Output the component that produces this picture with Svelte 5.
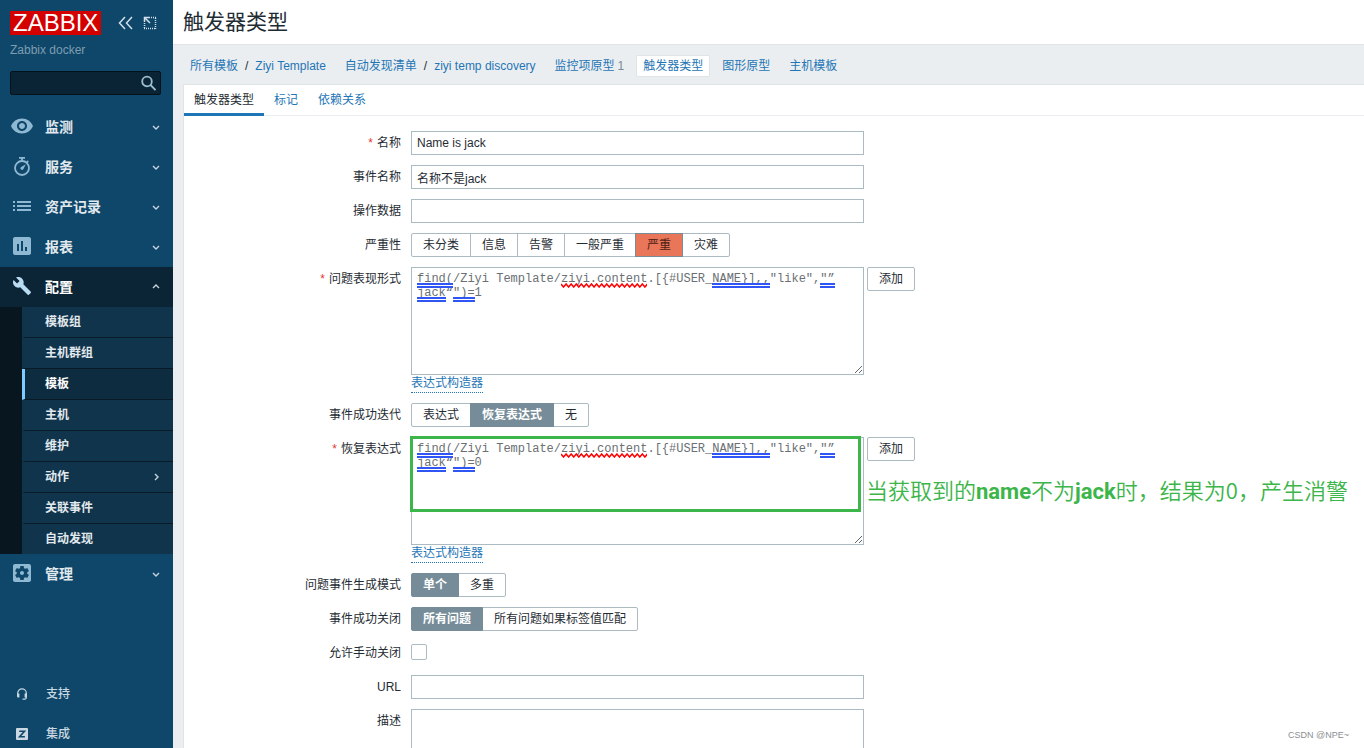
<script>
    const menu = [
        { label: "监测", icon: "eye" },
        { label: "服务", icon: "timer" },
        { label: "资产记录", icon: "list" },
        { label: "报表", icon: "chart" },
        {
            label: "配置",
            icon: "wrench",
            open: true,
            items: [
                { label: "模板组" },
                { label: "主机群组" },
                { label: "模板", selected: true },
                { label: "主机" },
                { label: "维护" },
                { label: "动作", more: true },
                { label: "关联事件" },
                { label: "自动发现" },
            ],
        },
        { label: "管理", icon: "gear" },
    ];

    const tabs = ["触发器类型", "标记", "依赖关系"];
    const severities = ["未分类", "信息", "告警", "一般严重", "严重", "灾难"];

    // row / start / length are counted in characters of the monospace text
    const marks = [
        { row: 0, start: 0, length: 5, type: "grammar" },
        { row: 0, start: 20, length: 12, type: "spelling" },
        { row: 0, start: 41, length: 8, type: "grammar" },
        { row: 0, start: 56, length: 2, type: "grammar" },
        { row: 1, start: 0, length: 4, type: "grammar" },
        { row: 1, start: 5, length: 3, type: "grammar" },
    ];

    const body = 'find(/Ziyi Template/ziyi.content.[{#USER_NAME}],,"like","”\njack“")=';

    let name = $state("Name is jack");
    let eventName = $state("名称不是jack");
    let opdata = $state("");
    let url = $state("");
    let severity = $state("严重");
    let recoveryMode = $state("恢复表达式");
    let eventMode = $state("单个");
    let closeMode = $state("所有问题");
    let problem = $state(body + "1");
    let recovery = $state(body + "0");
</script>

{#snippet icon(kind)}
    <svg class="icon" viewBox="0 0 24 24" aria-hidden="true">
        {#if kind === "eye"}
            <path d="M12 4.5C7 4.5 2.73 7.61 1 12c1.73 4.39 6 7.5 11 7.5s9.27-3.11 11-7.5c-1.73-4.39-6-7.5-11-7.5zM12 17c-2.76 0-5-2.24-5-5s2.24-5 5-5 5 2.24 5 5-2.24 5-5 5zm0-8c-1.66 0-3 1.34-3 3s1.34 3 3 3 3-1.34 3-3-1.34-3-3-3z" />
        {:else if kind === "timer"}
            <g fill="none" stroke="currentColor" stroke-width="1.8">
                <circle cx="12" cy="14" r="7" />
                <path d="M9 3.9h6M12 4v3M16.6 8.6l1.6-1.6" />
            </g>
            <path d="M15.8 10.2l-2.5 5a1.6 1.6 0 0 1-2.5-2z" />
        {:else if kind === "list"}
            <path d="M3 7h2v2H3zM7 7h14v2H7zM3 11h2v2H3zM7 11h14v2H7zM3 15h2v2H3zM7 15h14v2H7z" />
        {:else if kind === "chart"}
            <path d="M19 3H5c-1.1 0-2 .9-2 2v14c0 1.1.9 2 2 2h14c1.1 0 2-.9 2-2V5c0-1.1-.9-2-2-2zM9 17H7v-7h2v7zm4 0h-2V7h2v10zm4 0h-2v-4h2v4z" />
        {:else if kind === "wrench"}
            <path transform="translate(2.2 2.2) scale(.82)" d="M22.7 19l-9.1-9.1c.9-2.3.4-5-1.5-6.9-2-2-5-2.4-7.4-1.3L9 6 6 9 1.6 4.7C.4 7.1.9 10.1 2.9 12.1c1.9 1.9 4.6 2.4 6.9 1.5l9.1 9.1c.4.4 1 .4 1.4 0l2.3-2.3c.5-.4.5-1.1.1-1.4z" />
        {:else}
            <path d="M12 10c-1.1 0-2 .9-2 2s.9 2 2 2 2-.9 2-2-.9-2-2-2zm7-7H5c-1.11 0-2 .9-2 2v14c0 1.1.89 2 2 2h14c1.11 0 2-.9 2-2V5c0-1.1-.89-2-2-2zm-1.75 9c0 .23-.02.46-.05.68l1.48 1.16c.13.11.17.3.08.45l-1.4 2.42c-.09.15-.27.21-.43.15l-1.74-.7c-.36.28-.76.51-1.18.69l-.26 1.85c-.03.17-.18.3-.35.3h-2.8c-.17 0-.32-.13-.35-.29l-.26-1.85c-.43-.18-.82-.41-1.18-.69l-1.74.7c-.16.06-.34 0-.43-.15l-1.4-2.42c-.09-.15-.05-.34.08-.45l1.48-1.16c-.03-.23-.05-.46-.05-.69 0-.23.02-.46.05-.68l-1.48-1.16c-.13-.11-.17-.3-.08-.45l1.4-2.42c.09-.15.27-.21.43-.15l1.74.7c.36-.28.76-.51 1.18-.69l.26-1.85c.03-.17.18-.3.35-.3h2.8c.17 0 .32.13.35.29l.26 1.85c.43.18.82.41 1.18.69l1.74-.7c.16-.06.34 0 .43.15l1.4 2.42c.09.15.05.34-.08.45l-1.48 1.16c.03.23.05.46.05.69z" />
        {/if}
    </svg>
{/snippet}

{#snippet chevron(dir)}
    <svg class="chevron {dir}" viewBox="0 0 8 8" aria-hidden="true">
        <path d="M1 3l3 3 3-3" />
    </svg>
{/snippet}

{#snippet underlines()}
    <div class="marks" aria-hidden="true">
        {#each marks as m}
            <span
                class="mark {m.type}"
                style="left: {m.start}ch; width: {m.length}ch; top: {m.row * 14}px"
            >
                {#if m.type === "spelling"}
                    <svg viewBox="0 0 86 5" preserveAspectRatio="none">
                        <polyline
                            points={Array.from({ length: 35 }, (_, i) => `${i * 2.53},${i % 2 ? 4 : 1}`).join(" ")}
                        />
                    </svg>
                {/if}
            </span>
        {/each}
    </div>
{/snippet}

<div class="app" lang="zh-CN">
    <aside class="sidebar">
        <div class="brand">
            <a class="logo" href="#home">ZABBIX</a>
            <button class="icon-btn" type="button" aria-label="收起侧边栏">
                <svg viewBox="0 0 16 14"><path d="M8 1L2.500 7l5.500 6M15 1L9.500 7l5.500 6" /></svg>
            </button>
            <button class="icon-btn" type="button" aria-label="隐藏侧边栏">
                <svg viewBox="0 0 16 14">
                    <path stroke-dasharray="1 1" d="M8 1.500h7M14.500 2v11M3.500 7v6M3 12.500h12" />
                    <path d="M3.500 6V1.500H8M4 2l5 5" />
                </svg>
            </button>
        </div>
        <div class="server">Zabbix docker</div>
        <form class="search" role="search">
            <input type="text" aria-label="搜索" />
            <button type="button" aria-label="搜索">
                <svg viewBox="0 0 16 16"><circle cx="7" cy="6.500" r="4.800" /><path d="M10.500 10l5 5" /></svg>
            </button>
        </form>

        <nav class="menu">
            {#each menu as entry}
                <a class="menu-item" class:open={entry.open} href="#menu">
                    {@render icon(entry.icon)}
                    <span>{entry.label}</span>
                    {@render chevron(entry.open ? "up" : "down")}
                </a>
                {#if entry.items}
                    <div class="submenu">
                        {#each entry.items as item}
                            <a class="sub-item" class:selected={item.selected} href="#sub">
                                <span>{item.label}</span>
                                {#if item.more}{@render chevron("right")}{/if}
                            </a>
                        {/each}
                    </div>
                {/if}
            {/each}
        </nav>

        <nav class="extra">
            <a href="#support">
                <svg viewBox="0 0 12 12">
                    <path class="stroke" d="M1.700 7V5.200a4.300 4.300 0 0 1 8.600 0V9.500a1.500 1.500 0 0 1-1.500 1.600H6.500" />
                    <path d="M1 5.500h2.400v4H2.200A1.200 1.200 0 0 1 1 8.300zM8.600 5.500H11v2.800a1.200 1.200 0 0 1-1.200 1.200H8.600z" />
                </svg>
                <span>支持</span>
            </a>
            <a href="#integrations">
                <svg viewBox="0 0 12 12">
                    <rect width="12" height="12" rx="1" />
                    <path class="cut" d="M3.200 3.200h5.300L3.600 8.800h5.300" />
                </svg>
                <span>集成</span>
            </a>
        </nav>
    </aside>

    <main>
        <header><h1>触发器类型</h1></header>

        <nav class="crumbs">
            <div class="crumb">
                <a href="#all">所有模板</a><span class="slash">/</span><a href="#tpl">Ziyi Template</a>
            </div>
            <div class="crumb">
                <a href="#rules">自动发现清单</a><span class="slash">/</span><a href="#rule">ziyi temp discovery</a>
            </div>
            <div class="crumb"><a href="#items">监控项原型</a><sup>1</sup></div>
            <div class="crumb current"><a href="#triggers">触发器类型</a></div>
            <div class="crumb"><a href="#graphs">图形原型</a></div>
            <div class="crumb"><a href="#hosts">主机模板</a></div>
        </nav>

        <section class="pane">
            <div class="tabs">
                {#each tabs as tab, i}
                    <a class:active={i === 0} href="#tab">{tab}</a>
                {/each}
            </div>

            <form class="fields">
                <label class="required" for="name">名称</label>
                <input id="name" class="text" type="text" bind:value={name} />

                <label for="event-name">事件名称</label>
                <input id="event-name" class="text" type="text" bind:value={eventName} />

                <label for="opdata">操作数据</label>
                <input id="opdata" class="text" type="text" bind:value={opdata} />

                <span class="caption">严重性</span>
                <div class="segments severity">
                    {#each severities as s}
                        <label><input type="radio" name="severity" value={s} bind:group={severity} /><span>{s}</span></label>
                    {/each}
                </div>

                <label class="required" for="problem">问题表现形式</label>
                <div class="expression">
                    <div class="expression-row">
                        <div class="editor">
                            <textarea id="problem" spellcheck="false" bind:value={problem}></textarea>
                            {@render underlines()}
                        </div>
                        <button class="add" type="button">添加</button>
                    </div>
                    <a class="constructor" href="#constructor">表达式构造器</a>
                </div>

                <span class="caption">事件成功迭代</span>
                <div class="segments">
                    {#each ["表达式", "恢复表达式", "无"] as m}
                        <label><input type="radio" name="recovery" value={m} bind:group={recoveryMode} /><span>{m}</span></label>
                    {/each}
                </div>

                <label class="required" for="recovery">恢复表达式</label>
                <div class="expression">
                    <div class="expression-row">
                        <div class="editor">
                            <textarea id="recovery" spellcheck="false" bind:value={recovery}></textarea>
                            {@render underlines()}
                            <div class="highlight"></div>
                            <p class="note">当获取到的<b>name</b>不为<b>jack</b>时，结果为0，产生消警</p>
                        </div>
                        <button class="add" type="button">添加</button>
                    </div>
                    <a class="constructor" href="#constructor">表达式构造器</a>
                </div>

                <span class="caption">问题事件生成模式</span>
                <div class="segments">
                    {#each ["单个", "多重"] as m}
                        <label><input type="radio" name="mode" value={m} bind:group={eventMode} /><span>{m}</span></label>
                    {/each}
                </div>

                <span class="caption">事件成功关闭</span>
                <div class="segments">
                    {#each ["所有问题", "所有问题如果标签值匹配"] as m}
                        <label><input type="radio" name="close" value={m} bind:group={closeMode} /><span>{m}</span></label>
                    {/each}
                </div>

                <label for="manual">允许手动关闭</label>
                <input id="manual" class="check" type="checkbox" />

                <label for="url">URL</label>
                <input id="url" class="text" type="text" bind:value={url} />

                <label for="description">描述</label>
                <textarea id="description"></textarea>
            </form>
        </section>
    </main>

    <div class="watermark">CSDN @NPE~</div>
</div>

<style>
    .app {
        position: relative;
        display: flex;
        height: 100vh;
        overflow: hidden;
        background: #ebeef0;
        color: #1f2c33;
        font: 12px/14px "Liberation Sans", "Noto Sans CJK SC", sans-serif;
    }
    .app * {
        box-sizing: border-box;
    }
    a {
        color: #1f76b6;
        text-decoration: none;
    }
    button,
    input,
    textarea {
        margin: 0;
        font: inherit;
        color: inherit;
    }

    /* sidebar */
    .sidebar {
        flex: none;
        width: 173px;
        background: #0f476a;
    }
    .brand {
        display: flex;
        align-items: center;
        padding: 11px 16px 0 10px;
    }
    .logo {
        margin-right: auto;
        padding: 0 3px;
        background: #d40000;
        color: #fff;
        font-size: 24px;
        line-height: 24px;
    }
    .icon-btn {
        display: flex;
        margin-left: 8px;
        padding: 0;
        border: 0;
        background: none;
    }
    .icon-btn svg {
        width: 16px;
        height: 14px;
        fill: none;
        stroke: #d3e0e9;
        stroke-width: 1.5;
    }
    .server {
        padding: 8px 10px 0;
        color: #7d9db0;
    }
    .search {
        display: flex;
        height: 24px;
        margin: 14px 12px 12px 10px;
        border: 1px solid #04121c;
        border-radius: 2px;
        background: #0b2435;
    }
    .search input {
        flex: 1;
        min-width: 0;
        border: 0;
        outline: 0;
        background: none;
        color: #fff;
    }
    .search button {
        display: flex;
        align-items: center;
        padding: 0 4px;
        border: 0;
        background: none;
    }
    .search svg {
        width: 16px;
        height: 16px;
        fill: none;
        stroke: #9dbdd0;
        stroke-width: 1.8;
    }
    .menu-item {
        display: flex;
        align-items: center;
        height: 40px;
        padding: 0 13px 0 10px;
        color: #e1e9ee;
        font-size: 14px;
        font-weight: 700;
    }
    .menu-item span,
    .sub-item span {
        flex: 1;
    }
    .menu-item.open {
        background: #0b2536;
        color: #fff;
    }
    .icon {
        width: 24px;
        height: 24px;
        margin: 0 11px 2px 0;
        fill: currentColor;
        color: #8fb8d2;
    }
    .open .icon {
        color: #b9dcf3;
    }
    .chevron {
        width: 8px;
        height: 8px;
        fill: none;
        stroke: #c5d4de;
        stroke-width: 1.4;
    }
    .up {
        transform: rotate(180deg);
    }
    .right {
        transform: rotate(-90deg);
    }
    .submenu {
        padding-left: 22px;
        background: #08161f;
    }
    .sub-item {
        display: flex;
        align-items: center;
        height: 31px;
        padding: 0 13px 0 20px;
        border-left: 3px solid #10344b;
        border-bottom: 1px solid #081b27;
        background: #10344b;
        color: #e1e9ee;
        font-weight: 700;
    }
    .sub-item:last-child {
        height: 30px;
        border-bottom: 0;
    }
    .sub-item.selected {
        border-left-color: #7dcbff;
        background: #0d2c40;
        color: #fff;
    }
    .extra {
        margin-top: 80px;
    }
    .extra a {
        display: flex;
        align-items: center;
        gap: 18px;
        height: 40px;
        padding-left: 16px;
        color: #c9d8e2;
        font-weight: 500;
    }
    .extra svg {
        width: 12px;
        height: 12px;
        fill: #c9d8e2;
    }
    .extra .stroke {
        fill: none;
        stroke: #c9d8e2;
        stroke-width: 1.2;
    }
    .extra .cut {
        fill: none;
        stroke: #0f476a;
        stroke-width: 1.6;
    }

    /* page head */
    main {
        flex: 1;
        min-width: 0;
    }
    header {
        height: 45px;
        padding: 0 10px;
        border-bottom: 1px solid #dfe4e7;
        background: #fff;
    }
    h1 {
        margin: 0;
        font-size: 21px;
        font-weight: 400;
        line-height: 44px;
    }
    .crumbs {
        display: flex;
        align-items: center;
        gap: 7px;
        height: 39px;
        padding: 3px 11px 0;
    }
    .crumb {
        display: flex;
        align-items: center;
        height: 20px;
        padding: 0 6px;
    }
    .crumb.current {
        border-radius: 1px;
        background: #fff;
        box-shadow: 0 0 0 1px #dfe4e7;
    }
    .slash {
        margin: 0 7px;
    }
    sup {
        margin-left: 3px;
        color: #768d99;
        font-size: 12px;
        vertical-align: baseline;
    }

    /* form */
    .pane {
        min-height: 100%;
        margin-left: 10px;
        border: 1px solid #dfe4e7;
        border-right: 0;
        background: #fff;
    }
    .tabs {
        display: flex;
        height: 31px;
        border-bottom: 1px solid #ebeef0;
    }
    .tabs a {
        height: 31px;
        padding: 0 10px;
        line-height: 30px;
    }
    .tabs .active {
        border-bottom: 3px solid #1f76b6;
        color: #1f2c33;
    }
    .fields {
        display: grid;
        grid-template-columns: 217px 1fr;
        gap: 10px;
        align-items: start;
        padding: 15px 0;
    }
    .fields > label,
    .caption {
        line-height: 24px;
        text-align: right;
    }
    .required::before {
        content: "*";
        margin-right: 4px;
        color: #e33734;
    }
    .text,
    textarea {
        width: 453px;
        height: 24px;
        padding: 0 5px;
        border: 1px solid #acbbc2;
        border-radius: 0;
        outline: 0;
        background: #fff;
    }
    textarea {
        display: block;
        height: 108px;
        padding: 4px 5px;
        color: #6a7074;
        font: 12px/14px "Liberation Mono", monospace;
    }
    .segments {
        display: flex;
    }
    .segments label + label {
        margin-left: -1px;
    }
    .segments input {
        position: absolute;
        opacity: 0;
    }
    .segments span {
        display: block;
        height: 24px;
        padding: 0 11px;
        border: 1px solid #acbbc2;
        line-height: 22px;
    }
    .segments label:first-child span {
        border-radius: 2px 0 0 2px;
    }
    .segments label:last-child span {
        border-radius: 0 2px 2px 0;
    }
    .segments input:checked + span {
        position: relative;
        border-color: #768d99;
        background: #768d99;
        color: #fff;
        font-weight: 700;
    }
    .severity input:checked + span {
        background: #e97659;
        color: #4e2014;
        font-weight: 400;
    }
    .expression-row {
        display: flex;
        align-items: flex-start;
        gap: 3px;
    }
    .editor {
        position: relative;
    }
    .marks {
        position: absolute;
        top: 5px;
        left: 6px;
        font: 12px/14px "Liberation Mono", monospace;
        pointer-events: none;
    }
    .mark {
        position: absolute;
        height: 5px;
        margin-top: 11px;
    }
    .grammar {
        border: solid #2f55f5;
        border-width: 2px 0;
    }
    .spelling svg {
        display: block;
        width: 100%;
        height: 5px;
        fill: none;
        stroke: #f00;
        stroke-width: 1.5;
    }
    .highlight {
        position: absolute;
        inset: -1px 3px 33px -1px;
        border: 3px solid #3cb54a;
        pointer-events: none;
    }
    .note {
        position: absolute;
        top: 36px;
        left: 100%;
        margin: 0 0 0 2px;
        color: #3cb54a;
        font: 350 22px/32px "Noto Sans CJK SC", sans-serif;
        white-space: nowrap;
    }
    .note b {
        font-family: Roboto, sans-serif;
        font-weight: 700;
    }
    .add {
        height: 24px;
        padding: 0 11px;
        border: 1px solid #acbbc2;
        border-radius: 2px;
        background: #fff;
        line-height: 22px;
    }
    .constructor {
        display: table;
        height: 18px;
        border-bottom: 1px dotted #1f76b6;
        line-height: 17px;
    }
    .check {
        appearance: none;
        width: 16px;
        height: 16px;
        margin: 3px 0 5px;
        border: 1px solid #acbbc2;
        border-radius: 2px;
        background: #fff;
    }
    .watermark {
        position: absolute;
        right: 15px;
        bottom: 6px;
        color: #8a8f93;
        font-size: 9px;
    }
</style>
